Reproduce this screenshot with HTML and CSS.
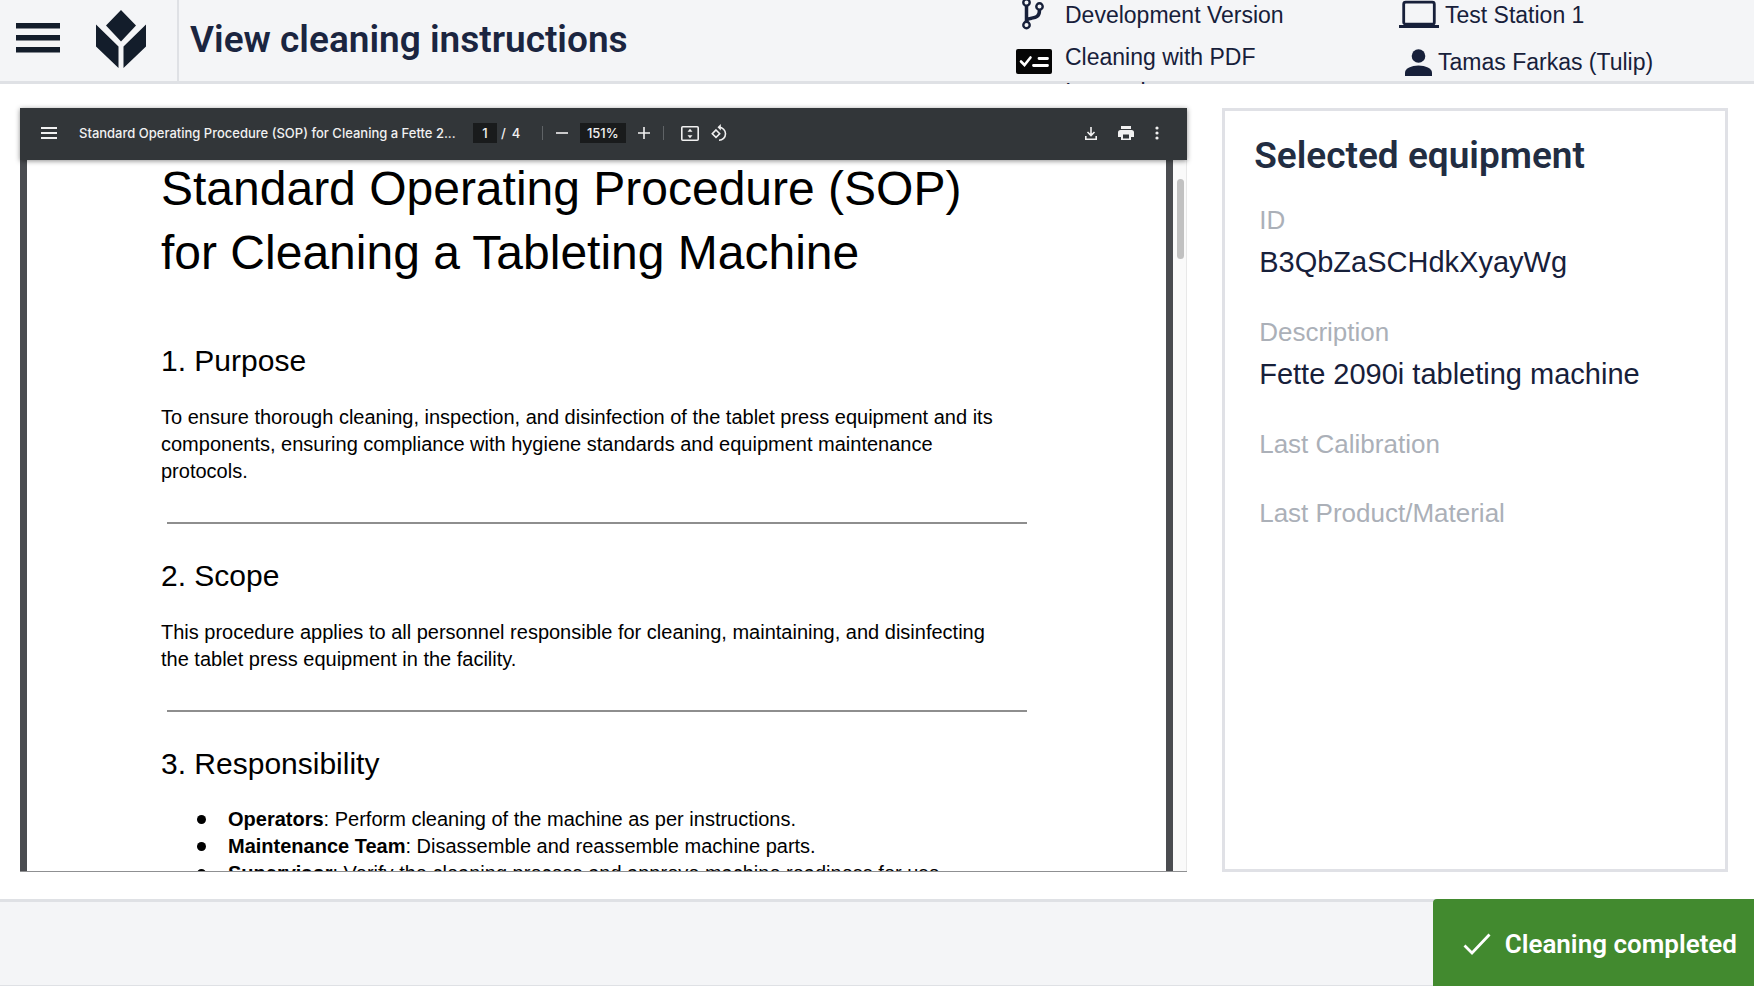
FILE: index.html
```html
<!DOCTYPE html>
<html lang="en">
<head>
<meta charset="utf-8">
<meta name="viewport" content="width=device-width, initial-scale=1">
<title>View cleaning instructions</title>
<link rel="stylesheet" href="styles.css">
</head>
<body>
<div class="app">
  <header class="topbar">
    <div class="brand">
      <button class="icon-button" type="button" aria-label="Menu">
        <svg width="44" height="32" viewBox="0 0 44 32" fill="currentColor"><path d="M0 0h44v5.500H0zM0 12h44v5.500H0zM0 24h44v5.500H0z"/></svg>
      </button>
      <svg class="logo" width="50" height="58" viewBox="0 0 50 58" fill="currentColor" aria-hidden="true"><path d="M25 0 40 15.500 25 31.500 10 15.500zM0 14.500 22.500 36.500V58L0 36.500zM50 14.500 27.500 36.500V58L50 36.500z"/></svg>
    </div>
    <h1 class="page-title">View cleaning instructions</h1>
    <div class="app-info">
      <div class="info-row">
        <span class="info-icon"><svg width="24" height="30" viewBox="0 0 24 30" fill="none" stroke="currentColor"><path stroke-width="3.500" d="M5.500 6v16M18.500 10c0 7-4 7.500-8 8.200-2.500.4-4 .8-5 2"/><g stroke-width="2.400"><circle cx="5.500" cy="2.500" r="3.200"/><circle cx="18.500" cy="6.500" r="3.200"/><circle cx="5.500" cy="25" r="3.200"/></g></svg></span>
        <span>Development Version</span>
      </div>
      <div class="info-row info-row-app">
        <span class="info-icon info-icon-app"><svg width="36" height="25" viewBox="0 0 36 25"><rect width="36" height="25" rx="2" fill="#050505"/><path d="m5 12.500 3.500 3.500 6-7.500" fill="none" stroke="#fff" stroke-width="2.600" stroke-linecap="round"/><path d="M23 9.500h8.500M17.500 16.500h14" stroke="#fff" stroke-width="2.800" stroke-linecap="round"/></svg></span>
        <span class="app-name">Cleaning with PDF Instruction</span>
      </div>
    </div>
    <div class="user-info">
      <div class="info-row station">
        <svg width="40" height="28" viewBox="0 0 40 28"><rect x="4.700" y="2.200" width="30.600" height="22" rx="2" fill="none" stroke="currentColor" stroke-width="2.800"/><path d="M0 25h40v3H0z" fill="currentColor"/></svg>
        <span>Test Station 1</span>
      </div>
      <div class="info-row user">
        <svg width="27" height="27" viewBox="0 0 27 27" fill="currentColor"><circle cx="13.500" cy="7" r="6.800"/><path d="M0 27v-3.500c0-4 6.500-7 13.500-7s13.500 3 13.500 7V27z"/></svg>
        <span>Tamas Farkas (Tulip)</span>
      </div>
    </div>
  </header>

  <main class="content">
    <section class="viewer" aria-label="PDF document">
      <div class="toolbar">
        <button class="icon-button" type="button" aria-label="Outline"><svg width="16" height="12" viewBox="0 0 16 12" fill="currentColor"><path d="M0 0h16v2H0zM0 5h16v2H0zM0 10h16v2H0z"/></svg></button>
        <span class="file-name">Standard Operating Procedure (SOP) for Cleaning a Fette 2...</span>
        <div class="page-controls">
          <input class="field page-field" type="text" value="1" aria-label="Page">
          <span>/</span><span class="page-count">4</span>
        </div>
        <span class="separator"></span>
        <div class="zoom-controls">
          <button class="icon-button" type="button" aria-label="Zoom out"><svg width="12" height="12" viewBox="0 0 12 12" fill="currentColor"><path d="M0 5.200h12v1.600H0z"/></svg></button>
          <input class="field zoom-field" type="text" value="151%" aria-label="Zoom">
          <button class="icon-button" type="button" aria-label="Zoom in"><svg width="12" height="12" viewBox="0 0 12 12" fill="currentColor"><path d="M0 5.200h5.200V0h1.600v5.200H12v1.600H6.800V12H5.200V6.800H0z"/></svg></button>
        </div>
        <span class="separator"></span>
        <div class="view-controls">
          <button class="icon-button" type="button" aria-label="Fit to page"><svg width="18" height="15" viewBox="0 0 18 15"><rect x=".8" y=".8" width="16.400" height="13.400" rx="1" fill="none" stroke="currentColor" stroke-width="1.600"/><path d="m9 2.800 2.500 3h-5zM9 12.200l2.500-3h-5z" fill="currentColor"/></svg></button>
          <button class="icon-button" type="button" aria-label="Rotate"><svg width="17" height="18" viewBox="0 0 17 18" fill="none" stroke="currentColor" stroke-width="1.600"><path d="m5 6 3.700 3.700L5 13.400 1.300 9.700z"/><path d="M8 3.300a6.500 6.500 0 1 1 0 13"/><path d="M9.800 0v6.600L6.500 3.300z" fill="currentColor" stroke="none"/></svg></button>
        </div>
        <div class="file-controls">
          <button class="icon-button" type="button" aria-label="Download"><svg width="12" height="13" viewBox="0 0 12 13" fill="none" stroke="currentColor" stroke-width="1.600"><path d="M6 0v8M2.500 5 6 8.500 9.500 5M.8 9v3.200h10.400V9"/></svg></button>
          <button class="icon-button" type="button" aria-label="Print"><svg width="16" height="14" viewBox="0 0 16 14" fill="currentColor"><path d="M3 0h10v3H3z"/><path fill-rule="evenodd" d="M2.500 4h11A2.500 2.500 0 0 1 16 6.500V11h-3v3H3v-3H0V6.500A2.500 2.500 0 0 1 2.500 4zM5 8.500v4h6v-4z"/></svg></button>
          <button class="icon-button" type="button" aria-label="More"><svg width="4" height="14" viewBox="0 0 4 14" fill="currentColor"><circle cx="2" cy="2" r="1.600"/><circle cx="2" cy="7" r="1.600"/><circle cx="2" cy="12" r="1.600"/></svg></button>
        </div>
      </div>
      <div class="stage">
        <article class="sheet">
          <h2 class="doc-title">Standard Operating Procedure (SOP)<br>for Cleaning a Tableting Machine</h2>
          <h3 class="doc-heading">1. Purpose</h3>
          <p class="doc-text">To ensure thorough cleaning, inspection, and disinfection of the tablet press equipment and its<br>components, ensuring compliance with hygiene standards and equipment maintenance<br>protocols.</p>
          <hr class="rule">
          <h3 class="doc-heading">2. Scope</h3>
          <p class="doc-text">This procedure applies to all personnel responsible for cleaning, maintaining, and disinfecting<br>the tablet press equipment in the facility.</p>
          <hr class="rule">
          <h3 class="doc-heading">3. Responsibility</h3>
          <ul class="doc-list">
            <li><b>Operators</b>: Perform cleaning of the machine as per instructions.</li>
            <li><b>Maintenance Team</b>: Disassemble and reassemble machine parts.</li>
            <li><b>Supervisor</b>: Verify the cleaning process and approve machine readiness for use.</li>
          </ul>
        </article>
        <div class="scrollbar"><div class="thumb"></div></div>
      </div>
    </section>

    <aside class="equipment">
      <h2 class="equipment-title">Selected equipment</h2>
      <dl class="details">
        <div><dt>ID</dt><dd>B3QbZaSCHdkXyayWg</dd></div>
        <div><dt>Description</dt><dd>Fette 2090i tableting machine</dd></div>
        <div><dt>Last Calibration</dt></div>
        <div><dt>Last Product/Material</dt></div>
      </dl>
    </aside>
  </main>

  <footer class="bottombar">
    <button class="complete" type="button">
      <svg width="28" height="24" viewBox="0 0 28 24" fill="none" stroke="currentColor" stroke-width="2.800"><path d="m1.500 13.500 7.500 7.500L26.500 2.500"/></svg>
      <span>Cleaning completed</span>
    </button>
  </footer>
</div>
</body>
</html>
```
FILE: styles.css
```css
* { box-sizing: border-box; }

body {
  margin: 0;
  background: #fff;
  color: #17203a;
  font-family: "Liberation Sans", Arial, sans-serif;
}

h1, h2, h3, p, ul, dl, dd { margin: 0; padding: 0; }
svg { display: block; flex: none; }

.app {
  display: flex;
  flex-direction: column;
  height: 100vh;
}

.icon-button {
  flex: none;
  padding: 0;
  border: 0;
  background: none;
  color: inherit;
  cursor: pointer;
}

/* Top bar */
.topbar {
  display: flex;
  flex: none;
  height: 84px;
  overflow: hidden;
  background: linear-gradient(#dfe1e5, #dfe1e5) bottom / 100% 3px no-repeat #f4f5f7;
}

.brand {
  display: flex;
  gap: 36px;
  align-items: center;
  width: 179px;
  padding: 0 0 6px 16px;
  border-right: 2px solid #dfe1e5;
  color: #131d2b;
}

.page-title {
  flex: 1;
  padding-left: 11px;
  color: #1b2540;
  font: 600 37px/80px Roboto, sans-serif;
}

.app-info, .user-info {
  display: flex;
  flex-direction: column;
  font-size: 23px;
  line-height: 30px;
  white-space: nowrap;
}

.app-info { width: 383px; gap: 10px; }
.user-info { width: 355px; gap: 17px; }

.info-row { display: flex; }
.info-icon { width: 49px; padding-left: 5px; }

.info-row-app { align-items: flex-start; line-height: 35px; }
.info-icon-app { padding: 9px 0 0; }
.app-name { width: 240px; white-space: normal; }

.station { gap: 6px; }
.user { gap: 6px; padding-left: 6px; align-items: center; }

/* Main area */
.content {
  display: grid;
  flex: 1;
  grid-template-columns: minmax(0, 30fr) minmax(0, 13fr);
  gap: 35px;
  min-height: 0;
  padding: 24px 26px 27px 20px;
}

/* PDF viewer */
.viewer {
  display: flex;
  flex-direction: column;
  min-height: 0;
  border-bottom: 1px solid #8f9092;
}

.toolbar {
  display: flex;
  flex: none;
  align-items: center;
  height: 52px;
  padding: 0 28px 2px 21px;
  background: #323639;
  box-shadow: 0 1px 5px rgba(0, 0, 0, .45);
  color: #f1f1f1;
  font: 500 13px/20px Inter, sans-serif;
  position: relative;
  z-index: 1;
}

.file-name {
  width: 376px;
  margin-left: 22px;
  white-space: nowrap;
}

.page-controls { display: flex; gap: 4px; margin-left: 18px; }
.page-count { width: 32px; padding-left: 2px; }

.field {
  height: 20px;
  padding: 0;
  border: 0;
  background: #191b1c;
  color: inherit;
  font: inherit;
  text-align: center;
}

.page-field { width: 24px; }
.zoom-field { width: 46px; }

.separator { width: 1px; height: 14px; background: #5f6366; }
.zoom-controls { display: flex; gap: 12px; align-items: center; margin: 0 13px; }
.view-controls { display: flex; gap: 12px; align-items: center; margin-left: 17px; }
.file-controls { display: flex; gap: 21px; align-items: center; margin-left: auto; }

.stage {
  display: flex;
  flex: 1;
  min-height: 0;
  overflow: hidden;
  background: #4a4c50;
}

.sheet {
  flex: 1;
  min-height: 0;
  margin: 0 7px;
  padding: 0 134px;
  overflow: hidden;
  background: #fff;
  color: #000;
}

.doc-title { margin-top: -3px; font-size: 48px; font-weight: 400; line-height: 64px; white-space: nowrap; }
.doc-heading { font-size: 30px; font-weight: 400; line-height: 34px; }
.doc-title + .doc-heading { margin-top: 59px; }
.doc-text { margin-top: 26px; font-size: 20px; line-height: 27px; white-space: nowrap; }

.rule {
  height: 2px;
  margin: 37px 5px 35px 6px;
  border: 0;
  background: #8e8e8e;
}

.doc-list { margin-top: 25px; font-size: 20px; line-height: 27px; list-style: none; white-space: nowrap; }
.doc-list li { padding-left: 36px; }

.doc-list li::before {
  display: inline-block;
  width: 9px;
  height: 9px;
  margin-right: 22px;
  border-radius: 50%;
  background: #000;
  content: "";
  vertical-align: 2px;
}

.scrollbar {
  width: 14px;
  padding: 19px 2px 0 4px;
  border-right: 1px solid #e8e8e8;
  background: #fafafa;
}

.thumb { height: 80px; border-radius: 4px; background: #c1c1c1; }

/* Equipment card */
.equipment {
  padding: 22px 29px;
  border: 3px solid #e0e1e6;
}

.equipment-title {
  color: #222d42;
  font: 600 37px/46px Roboto, sans-serif;
}

.details {
  display: flex;
  flex-direction: column;
  gap: 35px;
  padding: 24px 0 0 5px;
}

.details dt { color: #abb0b8; font-size: 26px; line-height: 34px; }
.details dd { padding-top: 7px; font-size: 29px; line-height: 36px; }

/* Bottom bar */
.bottombar {
  display: flex;
  flex: none;
  justify-content: flex-end;
  height: 87px;
  background:
    linear-gradient(#dfe1e5, #dfe1e5) top / 100% 3px no-repeat,
    linear-gradient(#dfe1e5, #dfe1e5) bottom / 100% 1px no-repeat,
    #f4f5f7;
}

.complete {
  display: flex;
  gap: 14px;
  align-items: center;
  padding: 2px 17px 0 30px;
  border: 0;
  border-radius: 4px 0 0 0;
  background: #428a2f;
  color: #fff;
  font: 600 26px/32px Roboto, sans-serif;
  cursor: pointer;
}
```
